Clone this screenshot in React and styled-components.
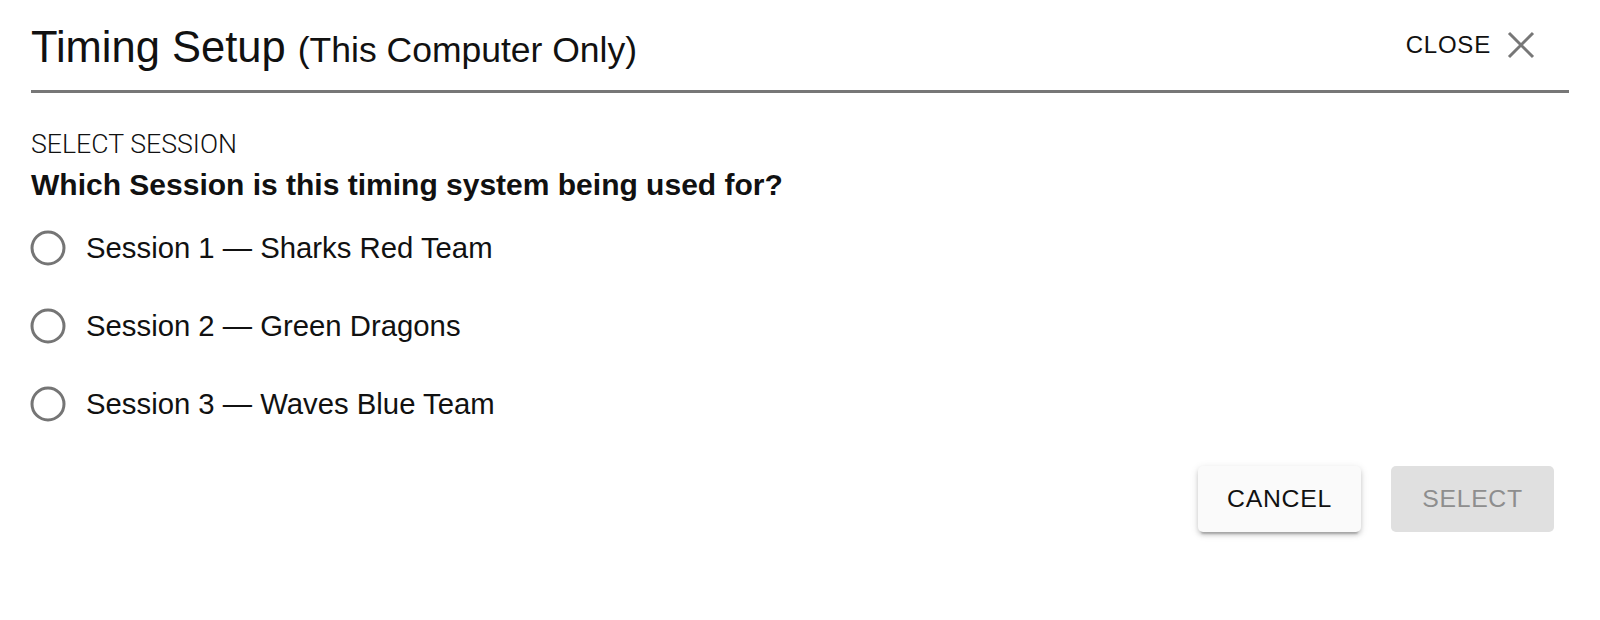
import React from "react";
import styled, { createGlobalStyle } from "styled-components";

const GlobalStyle = createGlobalStyle`
  html, body {
    margin: 0;
    padding: 0;
    background: #ffffff;
    font-family: "Liberation Sans", Arial, sans-serif;
    color: #111;
  }
`;

const Dialog = styled.div`
  width: 1600px;
  height: 620px;
  box-sizing: border-box;
  padding: 0 31px;
  background: #fff;
`;

const Header = styled.header`
  display: flex;
  align-items: center;
  justify-content: space-between;
  height: 90px;
  border-bottom: 3px solid #777777;
  box-sizing: content-box;
`;

const Title = styled.h2`
  margin: 0;
  font-size: 43.5px;
  font-weight: 400;
  line-height: 1;
  color: #111;
  padding-top: 6px;
`;

const Sub = styled.span`
  font-size: 35.5px;
`;

const CloseButton = styled.button`
  display: flex;
  align-items: center;
  gap: 16px;
  border: 0;
  background: transparent;
  padding: 0;
  margin-right: 34px;
  font-family: inherit;
  font-size: 24px;
  font-weight: 400;
  letter-spacing: 0.8px;
  color: #111;
  cursor: pointer;
`;

const Body = styled.main`
  padding-top: 37px;
`;

const Overline = styled.div`
  font-family: Roboto, "Liberation Sans", sans-serif;
  font-size: 26.7px;
  font-weight: 300;
  line-height: 28px;
  color: #111;
`;

const Question = styled.div`
  margin-top: 10px;
  font-size: 30px;
  font-weight: 700;
  line-height: 34px;
  color: #111;
`;

const RadioList = styled.div`
  display: flex;
  flex-direction: column;
  margin-top: 7px;
`;

const RadioRow = styled.label`
  display: flex;
  align-items: center;
  gap: 20px;
  height: 78px;
  font-size: 29.3px;
  color: #111;
  cursor: pointer;
`;

const RadioIcon = styled.svg`
  width: 36px;
  height: 36px;
  flex: none;
  margin-left: -1px;
`;

const Actions = styled.div`
  display: flex;
  justify-content: flex-end;
  gap: 30px;
  margin-top: 23px;
  padding-right: 15px;
`;

const Button = styled.button`
  width: 163px;
  height: 66px;
  border: 0;
  border-radius: 5px;
  font-family: inherit;
  font-size: 24.8px;
  font-weight: 400;
  letter-spacing: 0.7px;
  background: ${(p) => (p.$disabled ? "#e0e0e0" : "#fafafa")};
  color: ${(p) => (p.$disabled ? "#8e8e8e" : "#111")};
  box-shadow: ${(p) =>
    p.$disabled
      ? "none"
      : "0 5px 2px -3px rgba(0,0,0,0.2), 0 3px 4px 0 rgba(0,0,0,0.14), 0 2px 9px 0 rgba(0,0,0,0.12)"};
  cursor: ${(p) => (p.$disabled ? "default" : "pointer")};
`;

const sessions = [
  "Session 1 — Sharks Red Team",
  "Session 2 — Green Dragons",
  "Session 3 — Waves Blue Team",
];

export default function App() {
  return (
    <>
      <GlobalStyle />
      <Dialog>
        <Header>
          <Title>
            Timing Setup <Sub>(This Computer Only)</Sub>
          </Title>
          <CloseButton>
            CLOSE
            <svg width="28" height="28" viewBox="0 0 28 28">
              <path d="M2 2 L26 26 M26 2 L2 26" stroke="#777" strokeWidth="3" />
            </svg>
          </CloseButton>
        </Header>
        <Body>
          <Overline>SELECT SESSION</Overline>
          <Question>Which Session is this timing system being used for?</Question>
          <RadioList>
            {sessions.map((s) => (
              <RadioRow key={s}>
                <RadioIcon viewBox="0 0 36 36">
                  <circle cx="18" cy="18" r="16" fill="none" stroke="#757575" strokeWidth="3" />
                </RadioIcon>
                {s}
              </RadioRow>
            ))}
          </RadioList>
          <Actions>
            <Button>CANCEL</Button>
            <Button $disabled>SELECT</Button>
          </Actions>
        </Body>
      </Dialog>
    </>
  );
}
